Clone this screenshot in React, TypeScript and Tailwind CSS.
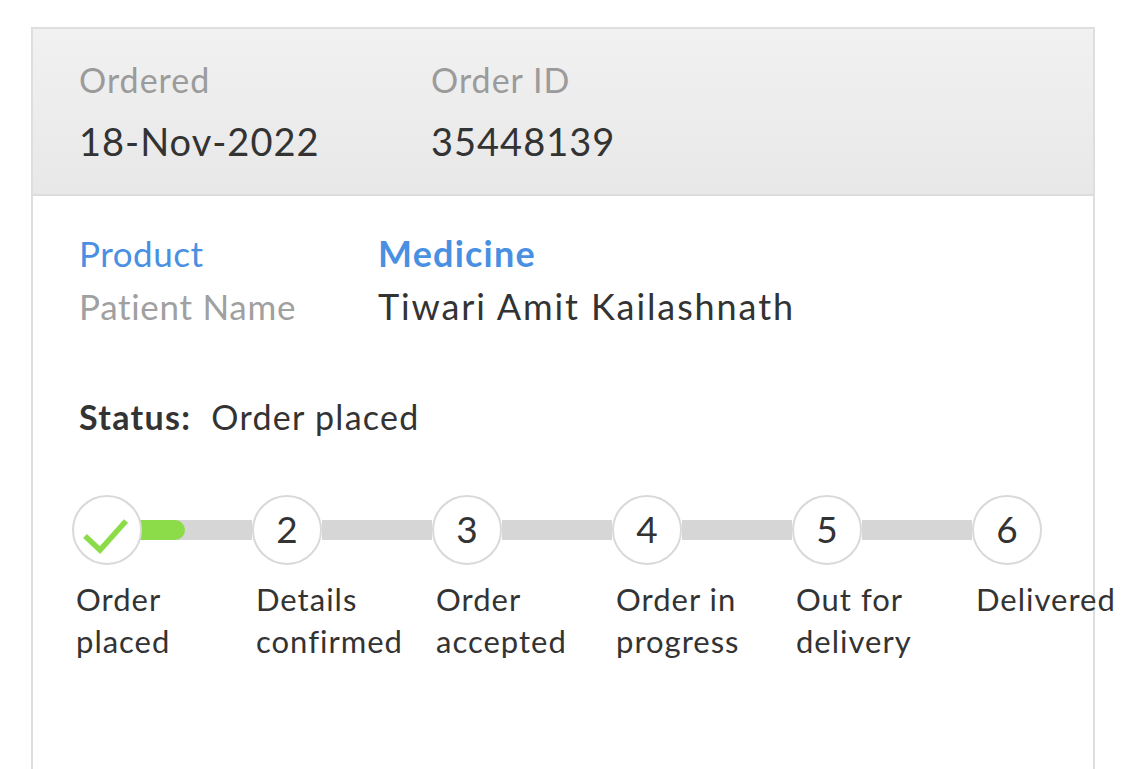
import React from 'react';

const steps = [
  ['Order', 'placed'],
  ['Details', 'confirmed'],
  ['Order', 'accepted'],
  ['Order in', 'progress'],
  ['Out for', 'delivery'],
  ['Delivered'],
];

const Step = ({ n, lines, last }: { n: number; lines: string[]; last: boolean }) => (
  <div className={last ? 'flex w-[70px] flex-col' : 'flex w-[180px] flex-col'}>
    <div className="flex items-center">
      <div className="relative z-10 flex h-[70px] w-[70px] shrink-0 items-center justify-center rounded-full border-2 border-[#d9d9d9] bg-white pb-[4px] text-[37px] leading-none text-[#333]">
        {n === 1 ? (
          <svg width="70" height="70" viewBox="0 0 70 70" className="absolute -left-[2px] -top-[2px]">
            <path d="M13 41 L28 55 L54 26" fill="none" stroke="#8bdc48" strokeWidth="5.5" />
          </svg>
        ) : (
          n
        )}
      </div>
      {!last && (
        <div className="h-[20px] flex-1 bg-[#d6d6d6]">
          {n === 1 && <div className="-ml-2 h-full w-[51px] rounded-r-full bg-[#8bdc48]" />}
        </div>
      )}
    </div>
    <div className="mt-[13px] whitespace-nowrap pl-[4px] text-[31px] leading-[42px] tracking-[1px] text-[#333]">
      {lines.map((l) => (
        <div key={l}>{l}</div>
      ))}
    </div>
  </div>
);

export default function App() {
  return (
    <div className="h-[769px] overflow-hidden bg-white pl-[31px] pt-[27px] font-['Lato',sans-serif]">
      <div className="min-h-[760px] w-[1064px] border-2 border-b-0 border-[#dedede]">
        <div className="flex border-b-2 border-[#dcdcdc] bg-gradient-to-b from-[#f1f1f1] to-[#e8e8e8] px-[46px] pb-[31px] pt-[31px]">
          <div className="w-[352px]">
            <div className="text-[34px] leading-[40px] tracking-[1px] text-[#9b9b9b]">Ordered</div>
            <div className="mt-[19px] text-[38px] leading-[44px] tracking-[1px] text-[#333]">18-Nov-2022</div>
          </div>
          <div>
            <div className="text-[34px] leading-[40px] tracking-[1px] text-[#9b9b9b]">Order ID</div>
            <div className="mt-[19px] text-[38px] leading-[44px] tracking-[1px] text-[#333]">35448139</div>
          </div>
        </div>
        <div className="pt-[31px]">
          <div className="px-[46px]">
            <div className="flex text-[35px] leading-[53px]">
              <div className="w-[299px] tracking-[0.5px] text-[#4a90e2]">Product</div>
              <div className="text-[36px] font-bold tracking-[1.2px] text-[#4a90e2]">Medicine</div>
            </div>
            <div className="flex text-[35px] leading-[53px]">
              <div className="w-[299px] tracking-[0.7px] text-[#a0a0a0]">Patient Name</div>
              <div className="text-[36px] tracking-[1.9px] text-[#333]">Tiwari Amit Kailashnath</div>
            </div>
            <div className="mt-[62px] text-[34px] leading-[44px] tracking-[1.3px] text-[#333]">
              <span className="font-bold">Status:</span>
              <span className="ml-[20px]">Order placed</span>
            </div>
          </div>
          <div className="mt-[56px] flex pl-[39px]">
            {steps.map((lines, i) => (
              <Step key={i} n={i + 1} lines={lines} last={i === steps.length - 1} />
            ))}
          </div>
        </div>
      </div>
    </div>
  );
}
